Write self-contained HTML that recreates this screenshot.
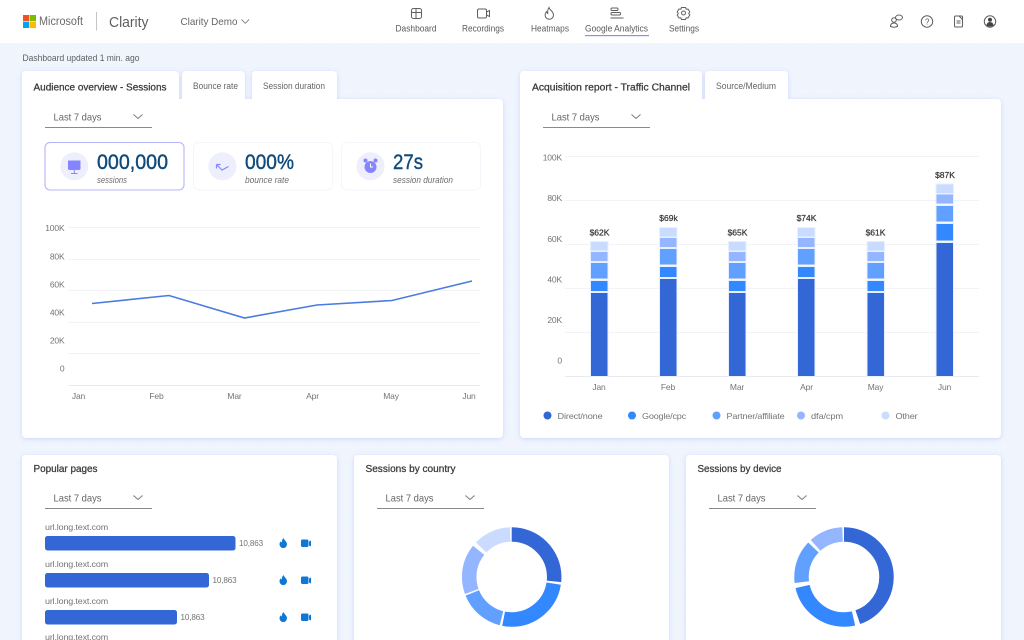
<!DOCTYPE html>
<html lang="en"><head><meta charset="utf-8"><title>Clarity Dashboard</title>
<style>
html,body{margin:0;padding:0;width:1024px;height:640px;overflow:hidden;background:#eff4fd}
svg{display:block;filter:blur(.3px)}
text{font-family:"Liberation Sans",sans-serif;fill:#555}
.nav{font-size:9px;fill:#5a5a5a}
.t{font-size:10.5px;fill:#3a3a3a;stroke:#3a3a3a;stroke-width:.28px}
.tab{font-size:9px;fill:#666}
.dd{font-size:10.5px;fill:#666}
.ax{font-size:8.5px;fill:#747474;letter-spacing:-.15px}
.val{font-size:21px;fill:#0f4a7a;stroke:#0f4a7a;stroke-width:.4px}
.lab{font-size:9px;font-style:italic;fill:#6e6e6e}
.bl{font-size:8.5px;fill:#3a3a3a;stroke:#3a3a3a;stroke-width:.25px}
.ic{fill:none;stroke:#5f5f5f;stroke-width:1}
.grid line{stroke:#f2f3f6;stroke-width:1}
.bars rect{stroke:#e8efff;stroke-width:1}
</style></head>
<body>
<svg width="1024" height="640" viewBox="0 0 1024 640" xmlns="http://www.w3.org/2000/svg">
<defs>
<filter id="s" x="-10%" y="-10%" width="120%" height="120%"><feDropShadow dx="0" dy="1" stdDeviation="2.5" flood-color="#b9c6f5" flood-opacity=".65"/></filter>
<pattern id="dots" width="3" height="3" patternUnits="userSpaceOnUse"><rect width="3" height="3" fill="#eff4fd"/><rect width="1" height="1" fill="#f4f7fe"/></pattern>
</defs>
<rect width="1024" height="640" fill="url(#dots)"/>
<rect width="1024" height="43" fill="#fff"/>

<!-- logo -->
<rect x="23" y="15" width="6.2" height="6.2" fill="#f25022"/><rect x="29.8" y="15" width="6.2" height="6.2" fill="#7fba00"/>
<rect x="23" y="21.8" width="6.2" height="6.2" fill="#00a4ef"/><rect x="29.8" y="21.8" width="6.2" height="6.2" fill="#ffb900"/>
<text x="39" y="25" font-size="11.5" textLength="44" lengthAdjust="spacingAndGlyphs" style="fill:#6a6a6a">Microsoft</text>
<line x1="96.5" y1="12" x2="96.5" y2="30.500" stroke="#c4c4c4"/>
<text x="109" y="27" font-size="15" textLength="39.500" lengthAdjust="spacingAndGlyphs" style="fill:#5f5f5f">Clarity</text>
<text x="180.500" y="25" font-size="10.500" textLength="57" lengthAdjust="spacingAndGlyphs" style="fill:#666">Clarity Demo</text>
<path d="M241.500 19.500l3.800 3.800 3.800-3.800" fill="none" stroke="#808080" stroke-width=".9"/>

<!-- nav icons -->
<g class="ic">
<rect x="411.500" y="8.500" width="10" height="10" rx="2"/><path d="M411.500 12.500h10M416 8.500v10"/>
<rect x="477.500" y="9" width="9" height="9" rx="1.500"/><path d="M486.500 12l3-1.500v6l-3-1.500"/>
<path d="M549 7.500c.5 2.500 4.500 4 4.500 7.500a4.200 4.200 0 0 1-8.400 0c0-1.500.6-2.500 1.400-3.300.2 1 .6 1.500 1.300 1.800-.3-2.200 0-4.300 1.200-6z"/>
<rect x="611" y="8" width="7" height="2.500" rx="1"/><rect x="611" y="12.500" width="9.500" height="2.500" rx="1"/><path d="M610.500 18h13"/>
<circle cx="683.500" cy="13" r="2"/>
<path d="M681.500 7.500h4l.7 1.700 1.800-.2 1.800 3-1.100 1.500 1.100 1.500-1.800 3-1.800-.2-.7 1.700h-4l-.7-1.700-1.800.2-1.800-3 1.100-1.500-1.100-1.500 1.800-3 1.800.2z"/>
</g>
<text class="nav" x="395.500" y="31.500" textLength="41" lengthAdjust="spacingAndGlyphs">Dashboard</text>
<text class="nav" x="462" y="31.500" textLength="42" lengthAdjust="spacingAndGlyphs">Recordings</text>
<text class="nav" x="531" y="31.500" textLength="38" lengthAdjust="spacingAndGlyphs">Heatmaps</text>
<text class="nav" x="585" y="31.500" textLength="63" lengthAdjust="spacingAndGlyphs">Google Analytics</text>
<text class="nav" x="669" y="31.500" textLength="30" lengthAdjust="spacingAndGlyphs">Settings</text>
<rect x="585" y="35" width="64" height="1.200" fill="#8d8dfa"/>

<!-- right icons -->
<g class="ic">
<ellipse cx="899" cy="17.500" rx="3.500" ry="2.500"/><circle cx="894" cy="20" r="2.300"/><path d="M890.500 26.500c0-2.500 1.500-3.500 3.500-3.500s3.500 1 3.500 3.500c-2 .8-5 .8-7 0z"/>
<circle cx="927" cy="21.500" r="5.700"/>
<rect x="954.500" y="16" width="8" height="11" rx="1"/><path d="M956.500 21h4M956.500 23h4M959 16l3.500 3.500"/>
<circle cx="990" cy="21.500" r="5.700"/>
</g>
<text x="925" y="24.500" font-size="8" style="fill:#555">?</text>
<circle cx="990" cy="19.800" r="2" fill="#444"/><path d="M986.300 25c.6-2 2-3 3.700-3s3.100 1 3.700 3a5 5 0 0 1-7.400 0z" fill="#444"/>

<text x="22.500" y="61" font-size="9.500" textLength="117" lengthAdjust="spacingAndGlyphs" style="fill:#5f5f5f">Dashboard updated 1 min. ago</text>

<!-- tabs and cards -->
<g filter="url(#s)" fill="#fff">
<path d="M182 100V75a4 4 0 0 1 4-4h55a4 4 0 0 1 4 4v25z"/>
<path d="M252 100V75a4 4 0 0 1 4-4h77a4 4 0 0 1 4 4v25z"/>
<path d="M705 100V75a4 4 0 0 1 4-4h75a4 4 0 0 1 4 4v25z"/>
<path d="M22 99V75a4 4 0 0 1 4-4h149a4 4 0 0 1 4 4v24h320a4 4 0 0 1 4 4v331a4 4 0 0 1-4 4H26a4 4 0 0 1-4-4z"/>
<path d="M520 103V75a4 4 0 0 1 4-4h174a4 4 0 0 1 4 4v24h295a4 4 0 0 1 4 4v331a4 4 0 0 1-4 4H524a4 4 0 0 1-4-4z"/>
<rect x="22" y="455" width="315" height="200" rx="4"/>
<rect x="354" y="455" width="315" height="200" rx="4"/>
<rect x="686" y="455" width="315" height="200" rx="4"/>
</g>
<text class="t" x="33.500" y="90.500" textLength="133" lengthAdjust="spacingAndGlyphs">Audience overview - Sessions</text>
<text class="tab" x="193" y="89" textLength="45" lengthAdjust="spacingAndGlyphs">Bounce rate</text>
<text class="tab" x="263" y="89" textLength="62" lengthAdjust="spacingAndGlyphs">Session duration</text>
<text class="t" x="532" y="90.500" textLength="158" lengthAdjust="spacingAndGlyphs">Acquisition report - Traffic Channel</text>
<text class="tab" x="716" y="89" textLength="60" lengthAdjust="spacingAndGlyphs">Source/Medium</text>

<!-- dropdowns -->
<g>
<text class="dd" x="53.500" y="120.500" textLength="48" lengthAdjust="spacingAndGlyphs">Last 7 days</text>
<path d="M133.500 114.500l4.500 4 4.500-4M631.500 114.500l4.500 4 4.500-4M133.500 495.500l4.500 4 4.500-4M465.500 495.500l4.500 4 4.500-4M797.500 495.500l4.500 4 4.500-4" fill="none" stroke="#777" stroke-width=".9"/>
<line x1="45" y1="127.500" x2="152" y2="127.500" stroke="#8a8a8a"/>
<text class="dd" x="551.500" y="120.500" textLength="48" lengthAdjust="spacingAndGlyphs">Last 7 days</text>
<line x1="543" y1="127.500" x2="650" y2="127.500" stroke="#8a8a8a"/>
<text class="dd" x="53.500" y="501.500" textLength="48" lengthAdjust="spacingAndGlyphs">Last 7 days</text>
<line x1="45" y1="508.500" x2="152" y2="508.500" stroke="#8a8a8a"/>
<text class="dd" x="385.500" y="501.500" textLength="48" lengthAdjust="spacingAndGlyphs">Last 7 days</text>
<line x1="377" y1="508.500" x2="484" y2="508.500" stroke="#8a8a8a"/>
<text class="dd" x="717.500" y="501.500" textLength="48" lengthAdjust="spacingAndGlyphs">Last 7 days</text>
<line x1="709" y1="508.500" x2="816" y2="508.500" stroke="#8a8a8a"/>
</g>

<!-- KPI -->
<rect x="45" y="142.500" width="139" height="47.500" rx="5" fill="#fff" stroke="#b5b5fb" stroke-width="1.100"/>
<rect x="193.500" y="142.500" width="139" height="47.500" rx="5" fill="#fff" stroke="#f5f6fb"/>
<rect x="341.500" y="142.500" width="139" height="47.500" rx="5" fill="#fff" stroke="#f5f6fb"/>
<circle cx="74.300" cy="166.300" r="14" fill="#eeeffd"/><circle cx="222.500" cy="166.300" r="14" fill="#eeeffd"/><circle cx="370.500" cy="166.300" r="14" fill="#eeeffd"/>
<path d="M68 160.500h12.500v8a1.500 1.500 0 0 1-1.500 1.500h-9.500a1.500 1.500 0 0 1-1.500-1.500z" fill="#8585ff"/><path d="M74.300 170v3.500M71 173.500h6.500" stroke="#8585ff" fill="none"/>
<path d="M216.500 164.500l5.500 5.500 6.500-3.500M216.500 164.500h4M216.500 164.500v4" stroke="#8585ff" stroke-width="1.200" fill="none"/>
<circle cx="370.500" cy="167" r="6" fill="#8585ff"/><circle cx="365.500" cy="160.500" r="2" fill="#8585ff"/><circle cx="375.500" cy="160.500" r="2" fill="#8585ff"/><path d="M370.500 163.500v3.500h2.500" stroke="#fff" fill="none"/>
<text class="val" x="97" y="169" textLength="71" lengthAdjust="spacingAndGlyphs">000,000</text>
<text class="val" x="245" y="169" textLength="49" lengthAdjust="spacingAndGlyphs">000%</text>
<text class="val" x="393" y="169" textLength="30" lengthAdjust="spacingAndGlyphs">27s</text>
<text class="lab" x="97" y="183" textLength="30" lengthAdjust="spacingAndGlyphs">sessions</text>
<text class="lab" x="245" y="183" textLength="44" lengthAdjust="spacingAndGlyphs">bounce rate</text>
<text class="lab" x="393" y="183" textLength="60" lengthAdjust="spacingAndGlyphs">session duration</text>

<!-- line chart -->
<g class="grid">
<line x1="68" x2="480" y1="227.500" y2="227.500"/><line x1="68" x2="480" y1="259.500" y2="259.500"/><line x1="68" x2="480" y1="290.500" y2="290.500"/><line x1="68" x2="480" y1="322.500" y2="322.500"/><line x1="68" x2="480" y1="353.500" y2="353.500"/><line x1="68" x2="480" y1="385.500" y2="385.500" style="stroke:#e9eaef"/>
</g>
<g text-anchor="end">
<text class="ax" x="64.500" y="231">100K</text><text class="ax" x="64.500" y="259.500">80K</text><text class="ax" x="64.500" y="287.500">60K</text><text class="ax" x="64.500" y="315.500">40K</text><text class="ax" x="64.500" y="343.500">20K</text><text class="ax" x="64.500" y="371.500">0</text>
</g>
<g text-anchor="middle">
<text class="ax" x="78.500" y="399">Jan</text><text class="ax" x="156.500" y="399">Feb</text><text class="ax" x="234.500" y="399">Mar</text><text class="ax" x="312.500" y="399">Apr</text><text class="ax" x="391" y="399">May</text><text class="ax" x="469" y="399">Jun</text>
</g>
<path d="M92 303.500L169 295.500L244.500 318L317 305L392 300.500L472 281" fill="none" stroke="#4a7be0" stroke-width="1.600"/>

<!-- bar chart -->
<g class="grid">
<line x1="565" x2="979" y1="156.500" y2="156.500"/><line x1="565" x2="979" y1="200.500" y2="200.500"/><line x1="565" x2="979" y1="244.500" y2="244.500"/><line x1="565" x2="979" y1="288.500" y2="288.500"/><line x1="565" x2="979" y1="332.500" y2="332.500"/><line x1="565" x2="979" y1="376.500" y2="376.500" style="stroke:#e9eaef"/>
</g>
<g text-anchor="end">
<text class="ax" x="562" y="160.500">100K</text><text class="ax" x="562" y="201">80K</text><text class="ax" x="562" y="242">60K</text><text class="ax" x="562" y="282.500">40K</text><text class="ax" x="562" y="323">20K</text><text class="ax" x="562" y="363.500">0</text>
</g>
<g class="bars">
<g><rect x="590.500" y="241.500" width="17.500" height="9.500" fill="#c9dcff"/><rect x="590.500" y="251.500" width="17.500" height="10" fill="#94b5ff"/><rect x="590.500" y="262.500" width="17.500" height="16.500" fill="#62a0ff"/><rect x="590.500" y="280.500" width="17.500" height="11" fill="#3387ff"/><rect x="590.500" y="292.500" width="17.500" height="84" fill="#3367d6"/></g>
<g><rect x="659.500" y="227.500" width="17.500" height="9.500" fill="#c9dcff"/><rect x="659.500" y="237.500" width="17.500" height="10" fill="#94b5ff"/><rect x="659.500" y="248.500" width="17.500" height="16.500" fill="#62a0ff"/><rect x="659.500" y="266.500" width="17.500" height="11" fill="#3387ff"/><rect x="659.500" y="278.500" width="17.500" height="98" fill="#3367d6"/></g>
<g><rect x="728.500" y="241.500" width="17.500" height="9.500" fill="#c9dcff"/><rect x="728.500" y="251.500" width="17.500" height="10" fill="#94b5ff"/><rect x="728.500" y="262.500" width="17.500" height="16.500" fill="#62a0ff"/><rect x="728.500" y="280.500" width="17.500" height="11" fill="#3387ff"/><rect x="728.500" y="292.500" width="17.500" height="84" fill="#3367d6"/></g>
<g><rect x="797.500" y="227.500" width="17.500" height="9.500" fill="#c9dcff"/><rect x="797.500" y="237.500" width="17.500" height="10" fill="#94b5ff"/><rect x="797.500" y="248.500" width="17.500" height="16.500" fill="#62a0ff"/><rect x="797.500" y="266.500" width="17.500" height="11" fill="#3387ff"/><rect x="797.500" y="278.500" width="17.500" height="98" fill="#3367d6"/></g>
<g><rect x="867" y="241.500" width="17.500" height="9.500" fill="#c9dcff"/><rect x="867" y="251.500" width="17.500" height="10" fill="#94b5ff"/><rect x="867" y="262.500" width="17.500" height="16.500" fill="#62a0ff"/><rect x="867" y="280.500" width="17.500" height="11" fill="#3387ff"/><rect x="867" y="292.500" width="17.500" height="84" fill="#3367d6"/></g>
<g><rect x="936" y="184" width="17.500" height="9.500" fill="#c9dcff"/><rect x="936" y="194" width="17.500" height="10" fill="#94b5ff"/><rect x="936" y="205.500" width="17.500" height="16.500" fill="#62a0ff"/><rect x="936" y="223.500" width="17.500" height="17.500" fill="#3387ff"/><rect x="936" y="242.500" width="17.500" height="134" fill="#3367d6"/></g>
</g>
<g text-anchor="middle">
<text class="bl" x="599.500" y="235.500">$62K</text><text class="bl" x="668.500" y="221">$69k</text><text class="bl" x="737.500" y="235.500">$65K</text><text class="bl" x="806.500" y="221">$74K</text><text class="bl" x="875.500" y="235.500">$61K</text><text class="bl" x="945" y="178">$87K</text>
<text class="ax" x="599" y="390">Jan</text><text class="ax" x="668" y="390">Feb</text><text class="ax" x="737" y="390">Mar</text><text class="ax" x="806.500" y="390">Apr</text><text class="ax" x="875.500" y="390">May</text><text class="ax" x="944.500" y="390">Jun</text>
</g>
<circle cx="547.500" cy="415.500" r="4" fill="#3367d6"/><circle cx="632" cy="415.500" r="4" fill="#3387ff"/><circle cx="716.500" cy="415.500" r="4" fill="#62a0ff"/><circle cx="801" cy="415.500" r="4" fill="#94b5ff"/><circle cx="885.500" cy="415.500" r="4" fill="#c9dcff"/>
<text class="ax" x="557.500" y="419" textLength="45" lengthAdjust="spacingAndGlyphs">Direct/none</text>
<text class="ax" x="642" y="419" textLength="44" lengthAdjust="spacingAndGlyphs">Google/cpc</text>
<text class="ax" x="726.500" y="419" textLength="58" lengthAdjust="spacingAndGlyphs">Partner/affiliate</text>
<text class="ax" x="811" y="419" textLength="32" lengthAdjust="spacingAndGlyphs">dfa/cpm</text>
<text class="ax" x="895.500" y="419" textLength="22" lengthAdjust="spacingAndGlyphs">Other</text>

<!-- bottom cards -->
<text class="t" x="33.500" y="472" textLength="64" lengthAdjust="spacingAndGlyphs">Popular pages</text>
<text class="t" x="365.500" y="472" textLength="90" lengthAdjust="spacingAndGlyphs">Sessions by country</text>
<text class="t" x="697.500" y="472" textLength="84" lengthAdjust="spacingAndGlyphs">Sessions by device</text>

<text class="ax" x="45" y="530" textLength="63" lengthAdjust="spacingAndGlyphs">url.long.text.com</text>
<rect x="45" y="536" width="190.500" height="14.500" rx="2.500" fill="#3367d6"/>
<text class="ax" x="239" y="546" textLength="24" lengthAdjust="spacingAndGlyphs">10,863</text>
<text class="ax" x="45" y="567" textLength="63" lengthAdjust="spacingAndGlyphs">url.long.text.com</text>
<rect x="45" y="573" width="164" height="14.500" rx="2.500" fill="#3367d6"/>
<text class="ax" x="212.500" y="583" textLength="24" lengthAdjust="spacingAndGlyphs">10,863</text>
<text class="ax" x="45" y="604" textLength="63" lengthAdjust="spacingAndGlyphs">url.long.text.com</text>
<rect x="45" y="610" width="132" height="14.500" rx="2.500" fill="#3367d6"/>
<text class="ax" x="180.500" y="620" textLength="24" lengthAdjust="spacingAndGlyphs">10,863</text>
<text class="ax" x="45" y="640" textLength="63" lengthAdjust="spacingAndGlyphs">url.long.text.com</text>

<g fill="#0f78d4">
<path d="M283.500 538c.5 2 3.500 3.500 3.500 6.300a3.700 3.700 0 0 1-7.500 0c0-1.300.6-2.300 1.500-3 .2.700.5 1 1 1.200-.2-1.500 0-3 1.500-4.500z"/>
<path d="M283.500 575c.5 2 3.500 3.500 3.500 6.300a3.700 3.700 0 0 1-7.500 0c0-1.300.6-2.300 1.500-3 .2.700.5 1 1 1.200-.2-1.500 0-3 1.500-4.500z"/>
<path d="M283.500 612c.5 2 3.500 3.500 3.500 6.300a3.700 3.700 0 0 1-7.500 0c0-1.300.6-2.300 1.500-3 .2.700.5 1 1 1.200-.2-1.500 0-3 1.500-4.500z"/>
<rect x="301" y="539.500" width="7.500" height="7.500" rx="1.500"/><path d="M309 541.500l2-1v6l-2-1z"/>
<rect x="301" y="576.500" width="7.500" height="7.500" rx="1.500"/><path d="M309 578.500l2-1v6l-2-1z"/>
<rect x="301" y="613.500" width="7.500" height="7.500" rx="1.500"/><path d="M309 615.500l2-1v6l-2-1z"/>
</g>

<!-- donuts -->
<g transform="translate(511.700 577) rotate(-90)" fill="none" stroke-width="14.500">
<circle r="42.500" pathLength="360" stroke="#3367d6" stroke-dasharray="96 264" stroke-dashoffset="0"/>
<circle r="42.500" pathLength="360" stroke="#3387ff" stroke-dasharray="92 268" stroke-dashoffset="-99"/>
<circle r="42.500" pathLength="360" stroke="#62a0ff" stroke-dasharray="54 306" stroke-dashoffset="-194"/>
<circle r="42.500" pathLength="360" stroke="#94b5ff" stroke-dasharray="59 301" stroke-dashoffset="-250"/>
<circle r="42.500" pathLength="360" stroke="#c9dcff" stroke-dasharray="44 316" stroke-dashoffset="-314"/>
</g>
<g transform="translate(844 577) rotate(-90)" fill="none" stroke-width="14.500">
<circle r="42.500" pathLength="360" stroke="#3367d6" stroke-dasharray="161 199" stroke-dashoffset="0"/>
<circle r="42.500" pathLength="360" stroke="#3387ff" stroke-dasharray="90 270" stroke-dashoffset="-167"/>
<circle r="42.500" pathLength="360" stroke="#62a0ff" stroke-dasharray="51 309" stroke-dashoffset="-263"/>
<circle r="42.500" pathLength="360" stroke="#94b5ff" stroke-dasharray="40 320" stroke-dashoffset="-318"/>
</g>
</svg>
</body></html>
